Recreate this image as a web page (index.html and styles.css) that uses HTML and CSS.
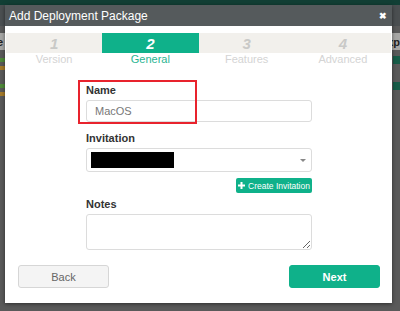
FILE: index.html
```html
<!DOCTYPE html>
<html lang="en">
<head>
    <meta charset="UTF-8">
    <meta name="viewport" content="width=device-width, initial-scale=1.0">
    <title>Add Deployment Package</title>
    <link rel="stylesheet" href="styles.css">
</head>
<body>
    <div class="backdrop">
        <div class="topbar"></div>
        <div class="page-head"></div>
        <div class="page-cols"><span>e</span><span>xp</span></div>
        <div class="page-row row-a"><span class="tag green"></span><span class="cell"></span></div>
        <div class="page-row"><span class="tag orange"></span></div>
        <div class="page-row row-b"><span class="tag green"></span><span class="cell"></span></div>
        <div class="page-row"><span class="tag orange"></span></div>
    </div>

    <div class="modal">
        <div class="modal-header">
            <h1>Add Deployment Package</h1>
            <span class="close">&#10006;</span>
        </div>

        <div class="steps">
            <div class="step">1</div>
            <div class="step active">2</div>
            <div class="step">3</div>
            <div class="step">4</div>
        </div>
        <div class="step-labels">
            <span>Version</span>
            <span class="active">General</span>
            <span>Features</span>
            <span>Advanced</span>
        </div>

        <form class="form">
            <div class="field field-name">
                <label>Name</label>
                <input type="text" value="MacOS">
                <div class="highlight"></div>
            </div>
            <div class="field">
                <label>Invitation</label>
                <div class="select">
                    <span class="redacted"></span>
                    <span class="caret"></span>
                </div>
            </div>
            <div class="actions-row">
                <button type="button" class="create-btn">
                    <svg class="plus" width="7" height="7" viewBox="0 0 7 7"><path d="M2.5 0h2v2.5H7v2H4.5V7h-2V4.5H0v-2h2.5z" fill="white"/></svg>
                    Create Invitation
                </button>
            </div>
            <div class="field">
                <label>Notes</label>
                <textarea></textarea>
            </div>
        </form>

        <div class="modal-footer">
            <button type="button" class="btn back">Back</button>
            <button type="button" class="btn next">Next</button>
        </div>
    </div>
</body>
</html>
```

FILE: styles.css
```css
body {
    margin: 0;
    padding: 0;
    background-color: #5a5a5a;
    font-family: "Liberation Sans", Arial, sans-serif;
    width: 400px;
    height: 311px;
    overflow: hidden;
    position: relative;
}

/* dimmed page behind the dialog */
.topbar {
    height: 5px;
    background-color: #123f35;
}

.page-head {
    height: 21px;
    background-color: #4b4f51;
}

.page-cols {
    margin-top: 7px;
    height: 17px;
    background-color: #a7a7a5;
    display: flex;
    justify-content: space-between;
    align-items: center;
    font-size: 11px;
    font-weight: bold;
    color: #222;
}

.page-cols span:first-child {
    margin-left: -3px;
}

.page-row {
    height: 8px;
    display: flex;
    justify-content: space-between;
    align-items: center;
}

.row-a {
    margin-top: 6px;
}

.row-b {
    margin-top: 10px;
}

.tag {
    width: 5px;
    height: 4px;
}

.tag.green {
    background-color: #4f8a3a;
}

.tag.orange {
    background-color: #a47a2a;
}

.cell {
    background-color: #175c48;
    width: 7px;
    height: 8px;
}

/* dialog */
.modal {
    position: absolute;
    left: 5px;
    top: 5px;
    width: 387px;
    height: 298px;
    background-color: white;
    box-shadow: 0 1px 4px rgba(0, 0, 0, 0.5);
}

.modal-header {
    height: 21px;
    display: flex;
    justify-content: space-between;
    align-items: center;
    padding: 0 5px 0 4px;
    background-color: #555a5c;
}

.modal-header h1 {
    margin: 0;
    font-size: 12px;
    font-weight: normal;
    color: white;
}

.close {
    color: white;
    font-size: 9px;
    font-weight: bold;
}

.steps {
    margin: 7px 1px 0 1px;
    height: 20px;
    display: grid;
    grid-template-columns: repeat(4, 1fr);
    background-color: #f2f0ec;
}

.step {
    display: flex;
    justify-content: center;
    align-items: center;
    font-size: 15px;
    font-weight: bold;
    font-style: italic;
    color: #c9c9c7;
}

.step.active {
    background-color: #0fb18a;
    color: white;
}

.step-labels {
    margin: 0 1px;
    display: grid;
    grid-template-columns: repeat(4, 1fr);
    text-align: center;
    font-size: 11px;
    line-height: 12px;
    color: #d4d4d4;
}

.step-labels .active {
    color: #2bb592;
}

.form {
    margin: 18px 0 0 81px;
    width: 226px;
}

.field {
    display: flex;
    flex-direction: column;
}

.field label {
    font-size: 11px;
    font-weight: bold;
    line-height: 14px;
    color: #333;
    margin-bottom: 3px;
}

.field-name {
    position: relative;
}

.field-name input {
    height: 22px;
    box-sizing: border-box;
    border: 1px solid #dcdcdc;
    border-radius: 3px;
    padding: 0 8px;
    font-family: "Liberation Sans", Arial, sans-serif;
    font-size: 11px;
    color: #777;
    margin-bottom: 9px;
}

.highlight {
    position: absolute;
    left: -8px;
    top: -3px;
    width: 115px;
    height: 40px;
    border: 2px solid #e8232d;
}

.select {
    height: 24px;
    box-sizing: border-box;
    border: 1px solid #dcdcdc;
    border-radius: 3px;
    display: flex;
    align-items: center;
    justify-content: space-between;
    padding: 0 5px 0 4px;
}

.redacted {
    width: 83px;
    height: 16px;
    background-color: black;
}

.caret {
    width: 0;
    height: 0;
    border-left: 3px solid transparent;
    border-right: 3px solid transparent;
    border-top: 3px solid #888;
}

.actions-row {
    display: flex;
    justify-content: flex-end;
    margin: 6px 0 4px 0;
}

.create-btn {
    height: 15px;
    width: 76px;
    padding: 0;
    border: none;
    border-radius: 2px;
    background-color: #0fb18a;
    color: white;
    font-family: "Liberation Sans", Arial, sans-serif;
    font-size: 8.5px;
    white-space: nowrap;
    display: flex;
    align-items: center;
    justify-content: center;
    gap: 3px;
}

.field textarea {
    height: 36px;
    box-sizing: border-box;
    border: 1px solid #dcdcdc;
    border-radius: 3px;
    resize: vertical;
}

.modal-footer {
    display: flex;
    justify-content: space-between;
    margin-top: 15px;
    padding: 0 12px 0 13px;
}

.btn {
    width: 91px;
    height: 23px;
    border-radius: 3px;
    font-family: "Liberation Sans", Arial, sans-serif;
    font-size: 11px;
}

.btn.back {
    background-color: #f4f4f4;
    border: 1px solid #d6d6d6;
    color: #666;
}

.btn.next {
    background-color: #0fb18a;
    border: 1px solid #0fb18a;
    color: white;
    font-weight: bold;
}
```
